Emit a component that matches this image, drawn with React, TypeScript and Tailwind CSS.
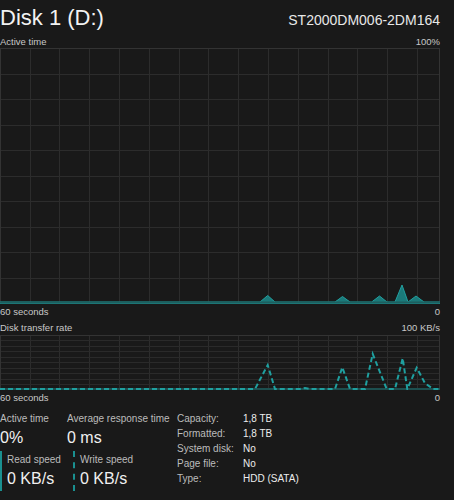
import React from 'react';

const W = 440;
const vLines = Array.from({ length: 14 }, (_, k) => Math.round(29.5 + 29.8 * k) + 0.5);

const activePeaks = [
  [0, 254],
  [260, 254],
  [267.7, 247.5],
  [275, 254],
  [335, 254],
  [342.5, 248.5],
  [350, 254],
  [371.7, 254],
  [379.5, 248],
  [387, 254],
  [395, 254],
  [402, 237],
  [408, 254],
  [416, 248],
  [424, 254],
  [440, 254],
];

const transferLine = [
  [0, 54],
  [255, 54],
  [267.7, 30],
  [275, 54],
  [300, 54],
  [305, 53],
  [310, 54],
  [335, 54],
  [342.3, 32.3],
  [350, 54],
  [365, 54],
  [372.7, 19],
  [386.7, 54],
  [395, 54],
  [402.7, 23.3],
  [407.3, 54],
  [416.7, 32.7],
  [425, 48.3],
  [433.3, 54],
  [440, 54],
];

const pts = (p: number[][]) => p.map(([x, y]) => `${x},${y}`).join(' ');

const ActiveChart = () => (
  <svg width={W} height={256} viewBox={`0 0 ${W} 256`} className="block">
    {vLines.map((x) => (
      <line key={x} x1={x} y1={0} x2={x} y2={256} stroke="#2c2c2c" strokeWidth={1} />
    ))}
    {Array.from({ length: 9 }, (_, k) => Math.round(25.5 * (k + 1)) + 0.5).map((y) => (
      <line key={y} x1={0} y1={y} x2={W} y2={y} stroke="#2c2c2c" strokeWidth={1} />
    ))}
    <rect x={0.5} y={0.5} width={W - 1} height={255} fill="none" stroke="#333" />
    <polygon points={pts([...activePeaks, [440, 256], [0, 256]])} fill="#1b7a7a" stroke="#21a0a0" strokeWidth={1} />
    <line x1={0} y1={254.5} x2={W} y2={254.5} stroke="#1d5f5f" strokeWidth={2} />
  </svg>
);

const TransferChart = () => (
  <svg width={W} height={55} viewBox={`0 0 ${W} 55`} className="block">
    {vLines.map((x) => (
      <line key={x} x1={x} y1={0} x2={x} y2={55} stroke="#2c2c2c" strokeWidth={1} />
    ))}
    {Array.from({ length: 9 }, (_, k) => Math.round(5.45 * (k + 1)) + 0.5).map((y) => (
      <line key={y} x1={0} y1={y} x2={W} y2={y} stroke="#2a2a2a" strokeWidth={1} />
    ))}
    <rect x={0.5} y={0.5} width={W - 1} height={54} fill="none" stroke="#333" />
    <line x1={0} y1={54} x2={W} y2={54} stroke="#1d4f4f" strokeWidth={2} />
    <polyline
      points={pts(transferLine)}
      fill="none"
      stroke="#1fa0a0"
      strokeWidth={2}
      strokeDasharray="5 3"
    />
  </svg>
);

export default function App() {
  return (
    <div className="w-[454px] h-[500px] bg-[#191919] text-white overflow-hidden font-['Liberation_Sans',sans-serif]">
      <div className="w-[440px]">
        {/* header */}
        <div className="flex items-baseline justify-between h-[36px]">
          <span className="text-[22px] leading-[36px] text-[#f2f2f2]">Disk 1 (D:)</span>
          <span className="text-[14px] leading-[36px] text-[#e8e8e8]">ST2000DM006-2DM164</span>
        </div>

        {/* active time chart */}
        <div className="flex justify-between h-[12px] text-[9.5px] leading-[12px] text-[#c8c8c8]">
          <span>Active time</span>
          <span>100%</span>
        </div>
        <ActiveChart />
        <div className="flex justify-between h-[16px] text-[9.5px] leading-[16px] text-[#c8c8c8]">
          <span>60 seconds</span>
          <span>0</span>
        </div>

        {/* transfer rate chart */}
        <div className="flex justify-between h-[15px] text-[9.5px] leading-[15px] text-[#c8c8c8]">
          <span>Disk transfer rate</span>
          <span>100 KB/s</span>
        </div>
        <TransferChart />
        <div className="flex justify-between h-[15px] text-[9.5px] leading-[15px] text-[#c8c8c8]">
          <span>60 seconds</span>
          <span>0</span>
        </div>

        {/* stats */}
        <div className="flex pt-[6px]">
          <div className="w-[177px]">
            <div className="flex">
              <div className="w-[67px]">
                <div className="text-[10px] leading-[15px] text-[#bcbcbc]">Active time</div>
                <div className="text-[16px] leading-[23px] text-[#f0f0f0]">0%</div>
              </div>
              <div>
                <div className="text-[10px] leading-[15px] text-[#bcbcbc]">Average response time</div>
                <div className="text-[16px] leading-[23px] text-[#f0f0f0]">0 ms</div>
              </div>
            </div>
            <div className="flex mt-[2px]">
              <div className="w-[73px] border-l-2 border-[#1a9090] pl-[5px] py-[1px]">
                <div className="text-[10px] leading-[15px] text-[#bcbcbc]">Read speed</div>
                <div className="text-[16px] leading-[23px] text-[#f0f0f0]">0 KB/s</div>
              </div>
              <div className="border-l-2 border-dashed border-[#1a9090] pl-[5px] py-[1px]">
                <div className="text-[10px] leading-[15px] text-[#bcbcbc]">Write speed</div>
                <div className="text-[16px] leading-[23px] text-[#f0f0f0]">0 KB/s</div>
              </div>
            </div>
          </div>
          <div className="grid grid-cols-[66px_auto] auto-rows-[15px] text-[10px] leading-[15px]">
            <span className="text-[#bcbcbc]">Capacity:</span>
            <span className="text-[#ececec]">1,8 TB</span>
            <span className="text-[#bcbcbc]">Formatted:</span>
            <span className="text-[#ececec]">1,8 TB</span>
            <span className="text-[#bcbcbc]">System disk:</span>
            <span className="text-[#ececec]">No</span>
            <span className="text-[#bcbcbc]">Page file:</span>
            <span className="text-[#ececec]">No</span>
            <span className="text-[#bcbcbc]">Type:</span>
            <span className="text-[#ececec]">HDD (SATA)</span>
          </div>
        </div>
      </div>
    </div>
  );
}
